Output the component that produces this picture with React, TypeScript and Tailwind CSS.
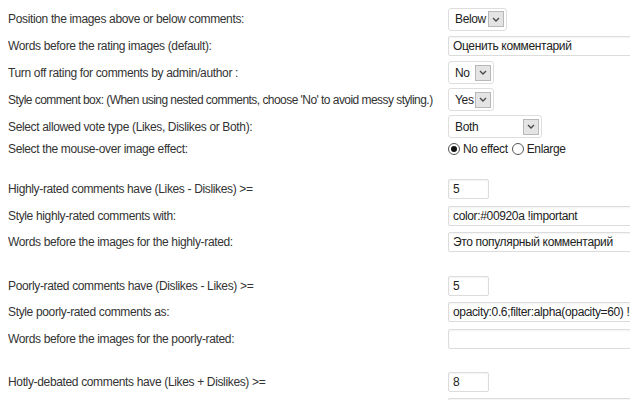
import React from 'react';

const font = { fontFamily: '"Liberation Sans", Arial, sans-serif' };

const Arrow: React.FC = () => (
    <span className="flex h-[16px] w-[16px] shrink-0 items-center justify-center border border-[#b8b8b8] bg-[#e4e4e4]">
        <svg width="8" height="5" viewBox="0 0 8 5">
            <path d="M1 1 L4 4 L7 1" fill="none" stroke="#4a4a4a" strokeWidth="1.4" />
        </svg>
    </span>
);

const Select: React.FC<{ value: string; width: string }> = ({ value, width }) => (
    <div className={`flex h-[23px] items-center rounded-[3px] border border-[#dedede] bg-white pl-[6px] pr-[2px] text-[#222] ${width}`}>
        <span className="flex-1">{value}</span>
        <Arrow />
    </div>
);

const TextInput: React.FC<{ value?: string; short?: boolean }> = ({ value = '', short }) => (
    <div
        className={`flex h-[20px] items-center overflow-hidden whitespace-nowrap rounded-[2px] border border-[#dcdcdc] bg-white pl-[4px] text-[#222] shadow-[inset_0_1px_2px_rgba(0,0,0,0.05)] ${short ? 'w-[41px]' : 'w-[200px]'}`}
    >
        {value}
    </div>
);

const Radio: React.FC<{ checked?: boolean; label: string }> = ({ checked, label }) => (
    <span className="flex items-center">
        <span className="flex h-[12px] w-[12px] items-center justify-center rounded-full border border-[#555] bg-white">
            {checked && <span className="h-[6px] w-[6px] rounded-full bg-[#111]" />}
        </span>
        <span className="ml-[3px] text-[#222]">{label}</span>
    </span>
);

const Row: React.FC<{ label: string; h: string; tight?: boolean; children?: React.ReactNode }> = ({ label, h, tight, children }) => (
    <div className={`flex items-center ${h}`}>
        <div className={`w-[440px] shrink-0 overflow-hidden whitespace-nowrap ${tight ? 'tracking-[-0.55px]' : ''}`}>{label}</div>
        <div className="flex items-center">{children}</div>
    </div>
);

export default function App() {
    return (
        <div className="h-[400px] w-[630px] overflow-hidden bg-white pl-2 pt-[6px] text-[12px] tracking-[-0.35px] text-[#333]" style={font}>
            <Row h="h-[26px]" label="Position the images above or below comments:">
                <Select value="Below" width="w-[59px]" />
            </Row>
            <Row h="h-[27px]" label="Words before the rating images (default):">
                <TextInput value="Оценить комментарий" />
            </Row>
            <Row h="h-[27px]" label="Turn off rating for comments by admin/author :">
                <Select value="No" width="w-[46px]" />
            </Row>
            <Row h="h-[27px]" tight label="Style comment box: (When using nested comments, choose 'No' to avoid messy styling.)">
                <Select value="Yes" width="w-[46px]" />
            </Row>
            <Row h="h-[27px]" label="Select allowed vote type (Likes, Dislikes or Both):">
                <Select value="Both" width="w-[94px]" />
            </Row>
            <Row h="h-[18px]" label="Select the mouse-over image effect:">
                <Radio checked label="No effect" />
                <span className="ml-[4px]">
                    <Radio label="Enlarge" />
                </span>
            </Row>

            <div className="h-[18px]" />
            <Row h="h-[26px]" label="Highly-rated comments have (Likes - Dislikes) >=">
                <TextInput value="5" short />
            </Row>
            <Row h="h-[27px]" label="Style highly-rated comments with:">
                <TextInput value="color:#00920a !important" />
            </Row>
            <Row h="h-[26px]" label="Words before the images for the highly-rated:">
                <TextInput value="Это популярный комментарий" />
            </Row>

            <div className="h-[17px]" />
            <Row h="h-[27px]" label="Poorly-rated comments have (Dislikes - Likes) >=">
                <TextInput value="5" short />
            </Row>
            <Row h="h-[26px]" label="Style poorly-rated comments as:">
                <TextInput value="opacity:0.6;filter:alpha(opacity=60) !important" />
            </Row>
            <Row h="h-[27px]" label="Words before the images for the poorly-rated:">
                <TextInput />
            </Row>

            <div className="h-[17px]" />
            <Row h="h-[26px]" label="Hotly-debated comments have (Likes + Dislikes) >=">
                <TextInput value="8" short />
            </Row>
            <Row h="h-[26px]" label="">
                <TextInput />
            </Row>
        </div>
    );
}
